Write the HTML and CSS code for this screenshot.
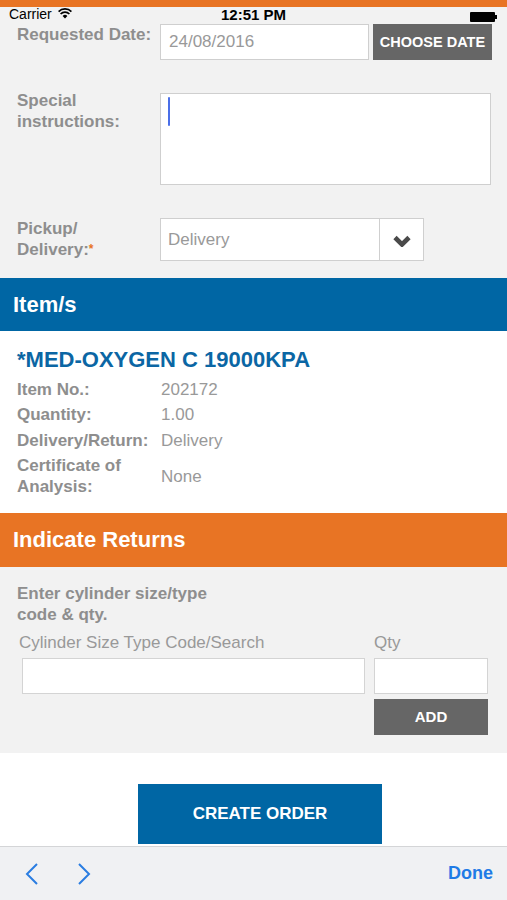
FILE: index.html
```html
<!DOCTYPE html>
<html>
<head>
<meta charset="utf-8">
<link rel="stylesheet" href="styles.css">
</head>
<body>
<div class="topbar"></div>
<div class="status">
  <div class="carrier">Carrier
    <svg class="wifi" width="14" height="11" viewBox="0 0 14 11"><path d="M7 10.5 L4.6 8 A3.4 3.4 0 0 1 9.4 8 Z" fill="#000"/><path d="M2.6 6 A6.2 6.2 0 0 1 11.4 6" stroke="#000" stroke-width="1.7" fill="none"/><path d="M0.6 3.6 A9 9 0 0 1 13.4 3.6" stroke="#000" stroke-width="1.7" fill="none"/></svg>
  </div>
  <div class="time">12:51 PM</div>
  <div class="battery"><span class="cell"></span><span class="nub"></span></div>
</div>

<div class="form">
  <div class="row row-date">
    <div class="label">Requested Date:</div>
    <div class="input date-input">24/08/2016</div>
    <div class="btn-gray choose">CHOOSE DATE</div>
  </div>
  <div class="row row-notes">
    <div class="label">Special<br>instructions:</div>
    <div class="textarea"><span class="caret"></span></div>
  </div>
  <div class="row row-pickup">
    <div class="label">Pickup/<br>Delivery:<span class="req">*</span></div>
    <div class="select">
      <div class="select-text">Delivery</div>
      <div class="select-arrow">
        <svg width="18" height="12" viewBox="0 0 18 12"><path d="M2 2.5 L9 9.5 L16 2.5" stroke="#4a4a4a" stroke-width="4.6" fill="none" stroke-linejoin="miter"/></svg>
      </div>
    </div>
  </div>
</div>

<div class="section-head blue">Item/s</div>
<div class="items">
  <div class="item-title">*MED-OXYGEN C 19000KPA</div>
  <div class="info"><div class="info-l">Item No.:</div><div class="info-v">202172</div></div>
  <div class="info"><div class="info-l">Quantity:</div><div class="info-v">1.00</div></div>
  <div class="info"><div class="info-l">Delivery/Return:</div><div class="info-v">Delivery</div></div>
  <div class="info info-center"><div class="info-l">Certificate of<br>Analysis:</div><div class="info-v">None</div></div>
</div>

<div class="section-head orange">Indicate Returns</div>
<div class="returns">
  <div class="ret-label">Enter cylinder size/type<br>code &amp; qty.</div>
  <div class="ret-grid">
    <div class="ret-col ret-code">
      <div class="ret-cap">Cylinder Size Type Code/Search</div>
      <div class="input ret-input"></div>
    </div>
    <div class="ret-col ret-qty">
      <div class="ret-cap">Qty</div>
      <div class="input ret-input"></div>
      <div class="btn-gray add">ADD</div>
    </div>
  </div>
</div>

<div class="actions">
  <div class="create">CREATE ORDER</div>
</div>

<div class="toolbar">
  <div class="nav">
    <svg width="16" height="24" viewBox="0 0 16 24"><path d="M13 2 L3 12 L13 22" stroke="#2a7de1" stroke-width="2" fill="none"/></svg>
    <svg width="16" height="24" viewBox="0 0 16 24"><path d="M3 2 L13 12 L3 22" stroke="#2a7de1" stroke-width="2" fill="none"/></svg>
  </div>
  <div class="done">Done</div>
</div>
</body>
</html>
```

FILE: styles.css
```css
* { box-sizing: border-box; }
html, body { margin: 0; padding: 0; }
body {
  width: 507px;
  height: 900px;
  overflow: hidden;
  background: #f2f2f2;
  font-family: "Liberation Sans", Arial, sans-serif;
  display: flex;
  flex-direction: column;
}
.topbar { height: 7px; background: #e87424; flex: none; }
.status {
  height: 15px;
  flex: none;
  display: flex;
  align-items: center;
  justify-content: space-between;
  padding: 0 10px 0 9px;
  position: relative;
}
.carrier { font-size: 14px; color: #000; display: flex; align-items: center; gap: 6px; line-height: 15px; }
.wifi { margin-top: -2px; }
.time {
  position: absolute;
  left: 0; right: 0;
  text-align: center;
  font-size: 15px;
  font-weight: bold;
  color: #000;
  line-height: 15px;
}
.battery { display: flex; align-items: center; margin-top: 4px; }
.battery .cell { width: 25px; height: 10px; background: #000; border-radius: 1px; }
.battery .nub { width: 2px; height: 4px; background: #000; }

.form { padding: 2px 0 17px 0; flex: none; }
.row { display: flex; align-items: flex-start; }
.label {
  width: 160px;
  flex: none;
  padding-left: 17px;
  font-size: 17px;
  font-weight: bold;
  color: #8e8e8e;
  line-height: 21px;
}
.row-notes { margin-top: 33px; }
.row-notes .label { margin-top: -3px; }
.row-pickup { margin-top: 33px; }
.req { color: #e87424; font-size: 12px; vertical-align: top; }
.input {
  background: #fff;
  border: 1px solid #cfcfcf;
  font-size: 17px;
  color: #999;
}
.date-input {
  width: 209px;
  height: 36px;
  line-height: 34px;
  padding-left: 8px;
}
.btn-gray {
  background: #666;
  color: #fff;
  font-weight: bold;
  font-size: 15px;
  text-align: center;
}
.choose {
  width: 119px;
  height: 36px;
  line-height: 36px;
  margin-left: 4px;
  font-size: 14.5px;
}
.textarea {
  width: 331px;
  height: 92px;
  background: #fff;
  border: 1px solid #cfcfcf;
  padding: 3px 0 0 7px;
}
.caret { display: block; width: 2px; height: 29px; background: #4b6fe8; border-radius: 1px; }
.select {
  width: 264px;
  height: 43px;
  background: #fff;
  border: 1px solid #cfcfcf;
  display: flex;
}
.select-text {
  flex: 1;
  border-right: 1px solid #cfcfcf;
  font-size: 17px;
  color: #999;
  line-height: 41px;
  padding-left: 7px;
}
.select-arrow { width: 43px; display: flex; align-items: center; justify-content: center; padding-top: 2px; }

.section-head {
  flex: none;
  color: #fff;
  font-weight: bold;
  font-size: 22px;
  padding-left: 13px;
  display: flex;
  align-items: center;
}
.blue { background: #0066a4; height: 53px; }
.orange { background: #e87424; height: 54px; }

.items { background: #fff; padding: 17px 0 16px 17px; flex: none; }
.item-title {
  font-size: 22px;
  font-weight: bold;
  color: #0b66a4;
  line-height: 24px;
  margin-bottom: 6.5px;
}
.info { display: flex; align-items: flex-start; margin-bottom: 4.5px; font-size: 17px; line-height: 21px; }
.info:last-child { margin-bottom: 0; }
.info-center { align-items: center; }
.info-l { width: 144px; flex: none; font-weight: bold; color: #8e8e8e; }
.info-v { color: #999; }

.returns { padding: 15.5px 0 18px 0; flex: none; }
.ret-label {
  padding-left: 17px;
  font-size: 17px;
  font-weight: bold;
  color: #8e8e8e;
  line-height: 21px;
}
.ret-grid { display: flex; margin-top: 7px; }
.ret-col { display: flex; flex-direction: column; }
.ret-code { margin-left: 22px; width: 343px; }
.ret-qty { margin-left: 9px; width: 114px; }
.ret-cap { font-size: 17px; color: #999; line-height: 21px; margin-bottom: 5.5px; }
.ret-code .ret-cap { margin-left: -3px; }
.ret-input { height: 36px; border-color: #d4d4d4; }
.add { height: 36px; line-height: 36px; margin-top: 5px; }

.actions { background: #fff; flex: 1; padding: 31px 0 0 138px; }
.create {
  width: 244px;
  height: 60px;
  background: #0066a4;
  color: #fff;
  font-weight: bold;
  font-size: 17px;
  text-align: center;
  line-height: 60px;
}
.toolbar {
  height: 54px;
  flex: none;
  background: #f0f1f3;
  border-top: 1px solid #d4d5d7;
  display: flex;
  align-items: center;
  justify-content: space-between;
  padding: 0 14px 0 24px;
}
.nav { display: flex; gap: 36px; align-items: center; }
.done { color: #1f7be6; font-size: 18px; font-weight: bold; }
```
